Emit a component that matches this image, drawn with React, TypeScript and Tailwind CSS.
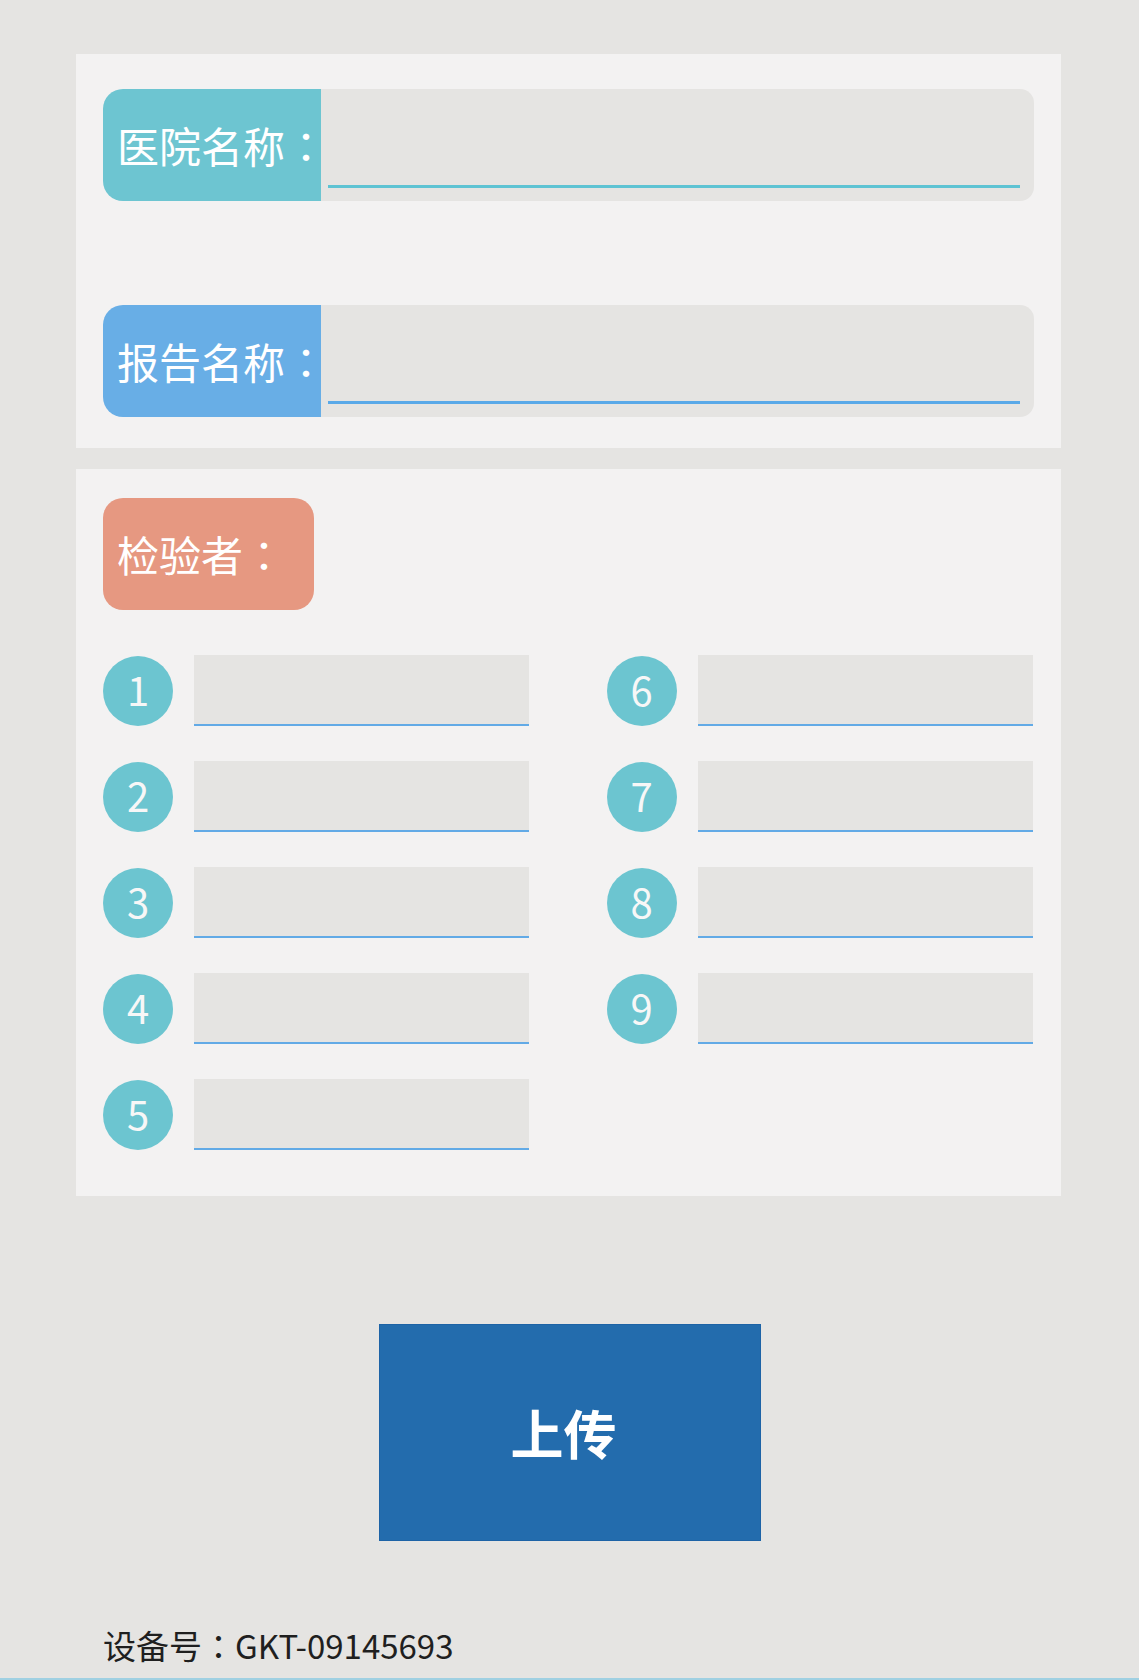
import React from 'react'

const FONT = { fontFamily: '"Noto Sans CJK SC", "Noto Sans", sans-serif' }
// 冒号用繁体字形，居中显示
const COLON = { fontFamily: '"Noto Sans CJK TC", "Noto Sans CJK SC", sans-serif' }

// 顶部两个带标签的输入框
function LabeledField({ label, tone }: { label: string; tone: 'teal' | 'blue' }) {
  const labelBg = tone === 'teal' ? 'bg-[#6dc5d1]' : 'bg-[#68aee6]'
  const lineBg = tone === 'teal' ? 'bg-[#5ec3d3]' : 'bg-[#5aa9e8]'
  return (
    <div className="flex h-[112px] w-full">
      <div className={`${labelBg} w-[218px] rounded-l-[20px] flex items-center pl-[14px] text-white text-[42px] leading-none whitespace-nowrap`}>
        {label}
        <span style={COLON}>：</span>
      </div>
      <div className="flex-1 bg-[#e5e4e2] rounded-r-[14px] flex flex-col justify-end pl-[7px] pr-[14px] pb-[13px]">
        <div className={`${lineBg} h-[3px] w-full`}></div>
      </div>
    </div>
  )
}

// 检验者编号行
function InspectorRow({ n }: { n: number }) {
  return (
    <div className="flex items-center h-[71px]">
      <div className="w-[70px] h-[70px] rounded-full bg-[#6cc5d0] flex items-center justify-center pb-[3px] text-[#f7f7f7] text-[40px] leading-none shrink-0">
        {n}
      </div>
      <div className="ml-[21px] w-[335px] h-[71px] bg-[#e5e4e2] border-b-2 border-[#62aae6]"></div>
    </div>
  )
}

export default function App() {
  const left = [1, 2, 3, 4, 5]
  const right = [6, 7, 8, 9]

  return (
    <div className="min-h-[1680px] w-full bg-[#e5e4e2] flex flex-col relative" style={FONT}>
      <div className="w-[985px] ml-[76px] pt-[54px] flex flex-col gap-[21px]">
        {/* 医院 / 报告 */}
        <div className="bg-[#f3f2f2] px-[27px] pt-[35px] pb-[31px] flex flex-col gap-[104px]">
          <LabeledField label="医院名称" tone="teal" />
          <LabeledField label="报告名称" tone="blue" />
        </div>

        {/* 检验者 */}
        <div className="bg-[#f3f2f2] px-[27px] pt-[29px] pb-[46px]">
          <div className="w-[211px] h-[112px] rounded-[20px] bg-[#e69881] flex items-center pl-[14px] text-white text-[42px] leading-none whitespace-nowrap">
            检验者<span style={COLON}>：</span>
          </div>
          <div className="mt-[45px] grid grid-cols-2 gap-x-[76px]">
            <div className="flex flex-col gap-[35px]">
              {left.map((n) => (
                <InspectorRow key={n} n={n} />
              ))}
            </div>
            <div className="flex flex-col gap-[35px]">
              {right.map((n) => (
                <InspectorRow key={n} n={n} />
              ))}
            </div>
          </div>
        </div>
      </div>

      <div className="mt-[128px] flex justify-center">
        <button className="w-[382px] h-[217px] bg-[#236cad] border border-[#1d63a6] text-white text-[53px] font-bold flex items-center justify-center pr-[12px] leading-none">
          上传
        </button>
      </div>

      <div className="mt-[88px] pl-[103px] text-[33px] text-[#1f1f1f] leading-none">
        设备号<span style={COLON}>：</span>GKT-09145693
      </div>

      <div className="absolute bottom-0 left-0 right-0 h-[2px] bg-[#9fd0e2]"></div>
    </div>
  )
}
